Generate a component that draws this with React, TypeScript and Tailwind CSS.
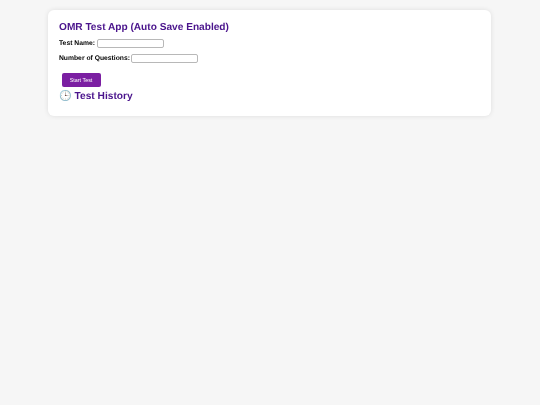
export default function App() {
  return (
    <div className="min-h-[405px] bg-[#f6f6f6] pt-[10px] font-['Liberation_Sans',sans-serif] [text-rendering:geometricPrecision] antialiased">
      <div className="ml-[48px] w-[443px] h-[106px] rounded-[6px] bg-white px-[11px] pt-[9px] shadow-[0_0_5px_rgba(0,0,0,0.1)] [will-change:transform]">
        <h1 className="pt-[2px] h-[14px] text-[10.15px] leading-[14px] font-bold text-[#4a148c]">OMR Test App (Auto Save Enabled)</h1>
        <div className="mt-[5px] flex items-center gap-[2px] h-[10px]">
          <label className="pt-[2px] text-[6.75px] font-bold text-black">Test Name:</label>
          <input className="h-[9px] w-[67px] rounded-[2px] border border-[#b8b8b8] bg-white" />
        </div>
        <div className="mt-[5px] flex items-center gap-px h-[10px]">
          <label className="pt-[2px] text-[6.75px] font-bold text-black">Number of Questions:</label>
          <input className="h-[9px] w-[67px] rounded-[2px] border border-[#b8b8b8] bg-white" />
        </div>
        <button className="mt-[10px] ml-[2.5px] block h-[14px] w-[39px] rounded-[2px] bg-[#7b1fa2] text-[5.4px] text-white">Start Test</button>
        <h2 className="mt-[2px] pt-px h-[14px] text-[10.2px] leading-[14px] font-bold text-[#4a148c]">🕒 Test History</h2>
      </div>
    </div>
  );
}
